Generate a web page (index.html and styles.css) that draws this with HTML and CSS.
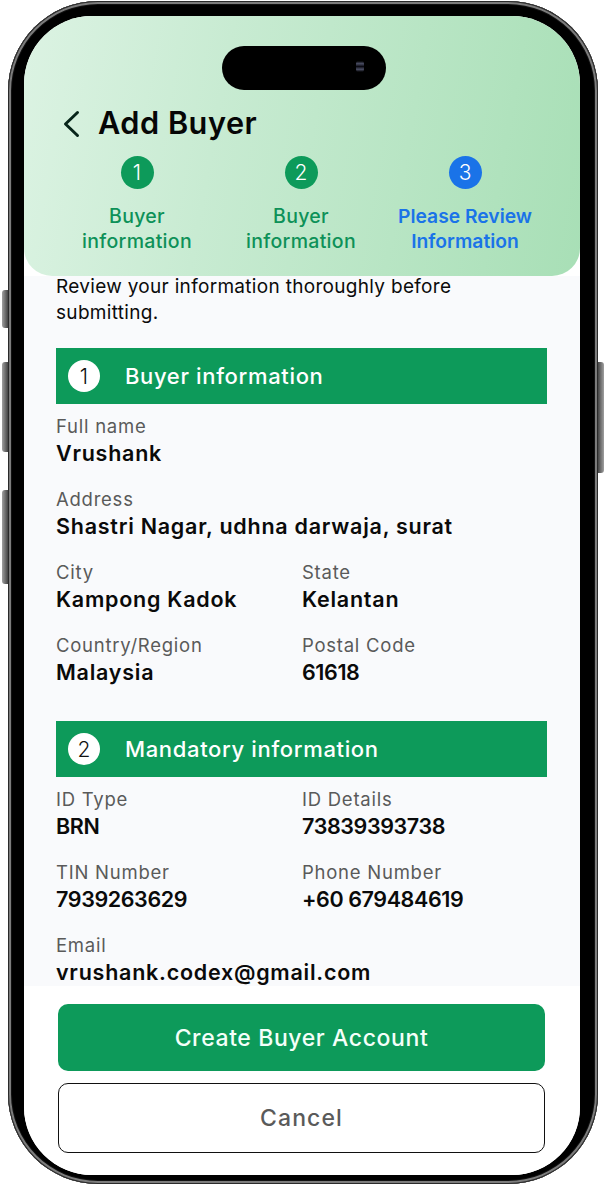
FILE: index.html
```html
<!DOCTYPE html>
<html lang="en">
<head>
<meta charset="utf-8">
<title>Add Buyer</title>
<link rel="stylesheet" href="styles.css">
</head>
<body>
<div class="phone">
  <span class="side side-mute"></span>
  <span class="side side-up"></span>
  <span class="side side-down"></span>
  <span class="side side-power"></span>
  <div class="screen">
    <div class="island"><span class="lens"></span></div>
    <header class="head">
      <div class="title-row">
        <svg class="back" viewBox="0 0 18 28" width="18" height="28"><path d="M15.5 2.5 3.5 14l12 11.5" fill="none" stroke="#07251a" stroke-width="3" stroke-linecap="round" stroke-linejoin="round"/></svg>
        <h1>Add Buyer</h1>
      </div>
      <ol class="steps">
        <li class="step"><span class="dot">1</span><span class="step-label">Buyer<br>information</span></li>
        <li class="step"><span class="dot">2</span><span class="step-label">Buyer<br>information</span></li>
        <li class="step step-active"><span class="dot">3</span><span class="step-label">Please Review<br>Information</span></li>
      </ol>
    </header>
    <main class="content">
      <p class="intro">Review your information thoroughly before<br>submitting.</p>
      <section class="block">
        <h2 class="bar"><span class="num">1</span>Buyer information</h2>
        <div class="fields">
          <div class="field wide"><span class="lbl">Full name</span><span class="val">Vrushank</span></div>
          <div class="field wide"><span class="lbl">Address</span><span class="val">Shastri Nagar, udhna darwaja, surat</span></div>
          <div class="field"><span class="lbl">City</span><span class="val">Kampong Kadok</span></div>
          <div class="field"><span class="lbl">State</span><span class="val">Kelantan</span></div>
          <div class="field"><span class="lbl">Country/Region</span><span class="val">Malaysia</span></div>
          <div class="field"><span class="lbl">Postal Code</span><span class="val tight">61618</span></div>
        </div>
      </section>
      <section class="block">
        <h2 class="bar"><span class="num">2</span>Mandatory information</h2>
        <div class="fields">
          <div class="field"><span class="lbl">ID Type</span><span class="val tight">BRN</span></div>
          <div class="field"><span class="lbl">ID Details</span><span class="val tight">73839393738</span></div>
          <div class="field"><span class="lbl">TIN Number</span><span class="val tight">7939263629</span></div>
          <div class="field"><span class="lbl">Phone Number</span><span class="val tight">+60 679484619</span></div>
          <div class="field wide"><span class="lbl">Email</span><span class="val">vrushank.codex@gmail.com</span></div>
        </div>
      </section>
    </main>
    <footer class="actions">
      <button class="btn btn-primary" type="button">Create Buyer Account</button>
      <button class="btn btn-ghost" type="button">Cancel</button>
    </footer>
  </div>
</div>
</body>
</html>
```
FILE: styles.css
```css
* { box-sizing: border-box; }
html, body { margin: 0; padding: 0; background: #fff; }
body { width: 604px; height: 1184px; overflow: hidden; padding: 1px 0 0 8px; font-family: "Inter", "Liberation Sans", sans-serif; }

.phone {
  position: relative;
  width: 590px;
  height: 1183px;
  padding: 15px 18px 9px 16px;
  border-radius: 90px;
  background: #000;
  box-shadow: inset 0 0 0 1px #2a2a2a, inset 0 0 0 3px #7c7c7c, inset 0 0 0 4px #111;
}
.side { position: absolute; width: 6px; left: -6px; background: linear-gradient(90deg, #a0a0a0, #444); }
.side-mute { top: 289px; height: 38px; border-radius: 3px 0 0 3px; }
.side-up { top: 361px; height: 90px; border-radius: 3px 0 0 3px; }
.side-down { top: 489px; height: 94px; border-radius: 3px 0 0 3px; }
.side-power { left: auto; right: -6px; top: 361px; height: 111px; border-radius: 0 3px 3px 0; background: linear-gradient(90deg, #444, #a0a0a0); }

.screen {
  position: relative;
  width: 100%;
  height: 100%;
  border-radius: 68px;
  overflow: hidden;
  background: #fff;
  display: flex;
  flex-direction: column;
}
.island {
  position: absolute;
  left: 198px;
  top: 30px;
  width: 164px;
  height: 44px;
  border-radius: 22px;
  background: #000;
}
.lens { position: absolute; right: 22px; top: 14px; width: 8px; height: 13px; border-radius: 4px; background: linear-gradient(#000 8%, #4a4d63 28%, #0a0a12 50%, #4a4d63 72%, #000 92%); }

.head {
  flex: none;
  height: 260px;
  padding: 91px 0 0 31px;
  border-radius: 0 0 28px 28px;
  background: linear-gradient(100deg, #dcf3e3 0%, #c8ebd2 35%, #a8dfb6 100%);
}
.title-row { display: flex; align-items: center; gap: 18px; height: 34px; padding-left: 7px; }
.back { flex: none; }
h1 { margin: 0 0 2px; font-size: 30.7px; line-height: 34px; font-weight: 600; letter-spacing: .5px; color: #060606; }
.steps { list-style: none; margin: 15px 0 0; padding: 0; display: grid; grid-template-columns: repeat(3, 164px); }
.step { display: flex; flex-direction: column; align-items: center; color: #0d9158; }
.dot { width: 33px; height: 33px; border-radius: 50%; background: #0d9a5a; color: #fff; font-size: 21px; font-weight: 300; display: flex; align-items: center; justify-content: center; }
.step-active .dot { background: #1a73e8; }
.step-label { margin-top: 15px; font-size: 19.5px; line-height: 25px; font-weight: 500; letter-spacing: .3px; text-align: center; white-space: nowrap; }
.step-active { color: #1a73e8; }
.step-active .step-label { font-size: 19.3px; font-weight: 600; letter-spacing: 0; }

.content {
  flex: 1;
  min-height: 0;
  overflow: hidden;
  padding: 0 33px 0 32px;
  background: #f9fafc;
}
.intro { margin: -2px 0 0; font-size: 19px; line-height: 26px; letter-spacing: .31px; color: #0b0b0b; }
.block { margin-top: 22px; }
.block + .block { margin-top: 36px; }
.bar {
  margin: 0;
  height: 56px;
  display: flex;
  align-items: center;
  gap: 25px;
  padding-left: 12px;
  background: #0d9a5a;
  color: #fff;
  font-size: 22px;
  font-weight: 500;
  letter-spacing: .65px;
}
.num { width: 32px; height: 32px; border-radius: 50%; background: #fff; color: #111; font-size: 21px; font-weight: 300; letter-spacing: 0; display: flex; align-items: center; justify-content: center; }
.fields { display: grid; grid-template-columns: 246px 1fr; row-gap: 21px; padding-top: 10px; }
.field { display: flex; flex-direction: column; }
.wide { grid-column: 1 / -1; }
.lbl { font-size: 18.5px; line-height: 24px; margin-bottom: 2px; color: #5a5a5a; letter-spacing: .75px; }
.val { font-size: 21.5px; line-height: 26px; font-weight: 600; color: #0a0a0a; letter-spacing: .75px; white-space: nowrap; }
.tight { letter-spacing: -.4px; }

.actions {
  flex: none;
  height: 189px;
  padding: 18px 35px 0 34px;
  display: flex;
  flex-direction: column;
  gap: 12px;
  background: #fff;
}
.btn { width: 100%; border-radius: 10px; font-family: inherit; font-size: 23px; font-weight: 500; letter-spacing: .6px; }
.btn-primary { height: 67px; border: 0; background: #0d9a5a; color: #f4fff9; }
.btn-ghost { height: 70px; border: 1.5px solid #111; background: #fff; color: #5a5a5a; letter-spacing: 1.1px; }
```
